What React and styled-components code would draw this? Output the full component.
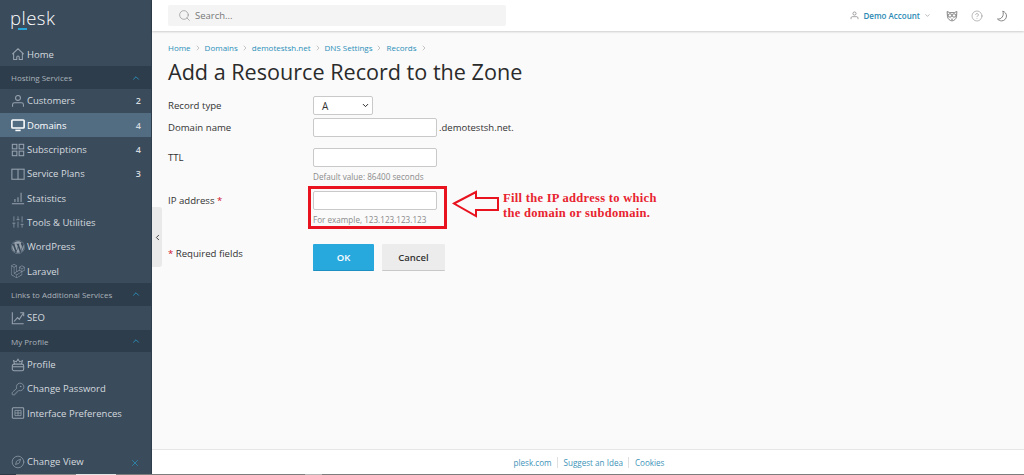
import React from "react";
import styled, { createGlobalStyle } from "styled-components";
import {
  SlidersVertical,
  KeyRound,
  Compass,
  X,
  Search,
  ChevronUp,
  ChevronDown,
  ChevronLeft,
  ChevronRight,
  HelpCircle,
} from "lucide-react";
import { FaWordpress, FaLaravel } from "react-icons/fa";

const GlobalStyle = createGlobalStyle`
  html, body { margin: 0; padding: 0; height: 100%; overflow: hidden; }
  body { font-family: "Open Sans", "Liberation Sans", sans-serif; color: #333; }
  #root { height: 100%; }
`;

const svg = (children) => ({ size = 14, strokeWidth, ...props }) => (
  <svg width={size} height={size} viewBox="0 0 16 16" fill="none" stroke="currentColor" strokeWidth="1.2" {...props}>
    {children}
  </svg>
);

const HomeIcon = svg(
  <path d="M1.5 8.2L8 2l6.5 6.2M3 7v7.2h3.6v-2.6a1.4 1.4 0 0 1 2.8 0v2.6H13V7" />
);
const UserIcon = svg(
  <>
    <circle cx="8" cy="4.5" r="2.8" />
    <path d="M1.8 14.5v-2.2c0-1.2 1-2.2 2.2-2.2h8c1.2 0 2.2 1 2.2 2.2v2.2" />
  </>
);
const MonitorIcon = svg(
  <>
    <rect x="1" y="2.2" width="14" height="9.3" rx="1" strokeWidth="1.8" />
    <path d="M5 14.2h6" strokeWidth="1.8" />
  </>
);
const GridIcon = svg(
  <>
    <rect x="1.5" y="1.5" width="5.2" height="5.2" />
    <rect x="9.3" y="1.5" width="5.2" height="5.2" />
    <rect x="1.5" y="9.3" width="5.2" height="5.2" />
    <rect x="9.3" y="9.3" width="5.2" height="5.2" />
  </>
);
const BookIcon = svg(
  <>
    <rect x="1" y="2.5" width="14" height="11.5" />
    <path d="M8 2.5v11.5" />
  </>
);
const StatsIcon = svg(<path d="M1 14.5h14M4.5 12.5V9M8 12.5V7M11.5 12.5V2" />);
const SeoIcon = svg(
  <>
    <path d="M1.5 1.5v13h13" />
    <path d="M3.5 12l4-4.5 2 2L14 2.5" />
    <path d="M10.5 2h4v4" />
  </>
);
const ProfileIcon = svg(
  <>
    <rect x="1.5" y="7" width="13" height="7.5" rx="2" />
    <path d="M1.5 10h13" />
    <path d="M4 7L3 3l3 1.5 2-3 2 3L13 3l-1 4" />
  </>
);
const PrefsIcon = svg(
  <>
    <rect x="1.5" y="2" width="13" height="12" rx="1" />
    <path d="M4.500 5h7v6h-7zM8 5v6M4.500 8h7" strokeWidth="0.9" />
  </>
);
const OwlIcon = svg(
  <>
    <path d="M1.5 2l3.5 1.5h6L14.5 2 14 9c-.5 3-3.5 5.5-6 5.5S2.500 12 2 9z" />
    <circle cx="5.300" cy="7.300" r="2.300" />
    <circle cx="10.700" cy="7.300" r="2.300" />
    <path d="M7 11.500l1 1.500 1-1.500" />
  </>
);
const CrescentIcon = svg(<path d="M9 1.500c3 1 5 3.500 5 6.500 0 3.600-3 6.500-6.500 6.500-2 0-4-.9-5.500-2.500 5 1 9.500-4.500 7-10.500z" />);

const navTop = [
  { label: "Customers", icon: UserIcon, count: 2 },
  { label: "Domains", icon: MonitorIcon, count: 4, active: true },
  { label: "Subscriptions", icon: GridIcon, count: 4 },
  { label: "Service Plans", icon: BookIcon, count: 3 },
  { label: "Statistics", icon: StatsIcon },
  { label: "Tools & Utilities", icon: SlidersVertical },
  { label: "WordPress", icon: FaWordpress },
  { label: "Laravel", icon: FaLaravel },
];

const navProfile = [
  { label: "Profile", icon: ProfileIcon },
  { label: "Change Password", icon: KeyRound },
  { label: "Interface Preferences", icon: PrefsIcon },
];

const crumbs = ["Home", "Domains", "demotestsh.net", "DNS Settings", "Records"];

const NavRow = ({ item }) => {
  const Icon = item.icon;
  return (
    <Row $active={item.active}>
      <IconSlot $active={item.active}>
        <Icon size={14} strokeWidth={1.2} />
      </IconSlot>
      <RowLabel $active={item.active}>{item.label}</RowLabel>
      {item.count && <Count>{item.count}</Count>}
    </Row>
  );
};

const Section = ({ title }) => (
  <SectionBand>
    {title}
    <ChevronUp size={10} color="#2a9ac9" strokeWidth={2} />
  </SectionBand>
);

const App = () => (
  <Page>
    <GlobalStyle />
    <Sidebar>
      <Logo>plesk</Logo>
      <NavRow item={{ label: "Home", icon: HomeIcon }} />
      <Section title="Hosting Services" />
      {navTop.map((item) => (
        <NavRow key={item.label} item={item} />
      ))}
      <Section title="Links to Additional Services" />
      <NavRow item={{ label: "SEO", icon: SeoIcon }} />
      <Section title="My Profile" />
      {navProfile.map((item) => (
        <NavRow key={item.label} item={item} />
      ))}
      <SidebarFoot>
        <NavRow item={{ label: "Change View", icon: Compass }} />
        <CloseMark>
          <X size={10} strokeWidth={1.6} />
        </CloseMark>
      </SidebarFoot>
    </Sidebar>
    <CollapseHandle>
      <ChevronLeft size={9} strokeWidth={2.4} />
    </CollapseHandle>

    <Main>
      <TopBar>
        <SearchBox>
          <Search size={13} strokeWidth={1.2} color="#8a8a8a" />
          Search...
        </SearchBox>
        <TopActions>
          <Account>
            <UserIcon size={9} />
            <AccountName>Demo Account</AccountName>
            <ChevronDown size={7} strokeWidth={2} color="#888" />
          </Account>
          <TopIcon>
            <OwlIcon size={12} />
          </TopIcon>
          <TopIcon>
            <HelpCircle size={12} strokeWidth={1} />
          </TopIcon>
          <TopIcon>
            <CrescentIcon size={12} />
          </TopIcon>
        </TopActions>
      </TopBar>

      <Content>
        <Breadcrumbs>
          {crumbs.map((crumb) => (
            <Crumb key={crumb}>
              {crumb}
              <ChevronRight size={8} strokeWidth={1.4} color="#888" />
            </Crumb>
          ))}
        </Breadcrumbs>
        <Title>Add a Resource Record to the Zone</Title>

        <Form>
          <TypeRow>
            <Label>Record type</Label>
            <SelectBox>
              A
              <ChevronDown size={9} strokeWidth={2.6} color="#222" />
            </SelectBox>
          </TypeRow>
          <DomainRow>
            <Label>Domain name</Label>
            <Field>
              <Input />
              <Suffix>.demotestsh.net.</Suffix>
            </Field>
          </DomainRow>
          <HintRow>
            <Label>TTL</Label>
            <div>
              <Input />
              <Hint>Default value: 86400 seconds</Hint>
            </div>
          </HintRow>
          <HintRow>
            <Label>
              IP address <Star>*</Star>
            </Label>
            <div>
              <Input />
              <Hint>For example, 123.123.123.123</Hint>
            </div>
          </HintRow>
          <ButtonsRow>
            <Label>
              <Star>*</Star> Required fields
            </Label>
            <Buttons>
              <OkButton>OK</OkButton>
              <CancelButton>Cancel</CancelButton>
            </Buttons>
          </ButtonsRow>
        </Form>

        <RedBox />
        <Arrow width="48" height="28" viewBox="0 0 48 28">
          <path
            d="M2 13.500L24 2v6h22v12H24v6z"
            fill="none"
            stroke="#e8131f"
            strokeWidth="2"
            strokeLinejoin="miter"
          />
        </Arrow>
        <Note>
          Fill the IP address to which
          <br />
          the domain or subdomain.
        </Note>
      </Content>

      <Footer>
        <FooterLink>plesk.com</FooterLink>
        <FooterLink>Suggest an Idea</FooterLink>
        <FooterLink>Cookies</FooterLink>
      </Footer>
    </Main>
    <BottomEdge />
  </Page>
);

export default App;

const Page = styled.div`
  display: flex;
  height: 475px;
  width: 1024px;
  position: relative;
  overflow: hidden;
`;

const BottomEdge = styled.div`
  position: absolute;
  left: 0;
  right: 0;
  bottom: 0;
  height: 1px;
  z-index: 3;
  background: linear-gradient(
    to right,
    #2e3a46 0 16px,
    #8a8a8a 16px 76px,
    #e4e4e4 76px 116px,
    #7d7d7d 116px 305px,
    #b5b5b5 305px 322px,
    #7d7d7d 322px
  );
`;

const Sidebar = styled.aside`
  width: 151px;
  flex: none;
  display: flex;
  flex-direction: column;
  background: #3a4b5c;
  border-right: 1px solid #2f3e4c;
  position: relative;
`;

const Logo = styled.div`
  height: 42px;
  flex: none;
  padding-left: 10px;
  box-sizing: border-box;
  font-size: 18.5px;
  font-weight: 300;
  line-height: 36px;
  color: #fff;
  letter-spacing: 0.5px;
  position: relative;

  &::after {
    content: "";
    position: absolute;
    left: 18px;
    top: 28px;
    width: 9px;
    height: 2px;
    background: #28a5d8;
  }
`;

const Row = styled.div`
  height: 24.3px;
  flex: none;
  display: flex;
  align-items: center;
  padding: 0 10px 0 11px;
  font-size: 9.5px;
  background: ${(p) => (p.$active ? "#526d82" : "transparent")};
`;

const IconSlot = styled.span`
  width: 16px;
  height: 14px;
  flex: none;
  display: flex;
  align-items: center;
  color: ${(p) => (p.$active ? "#fff" : "#98a3ae")};
`;

const RowLabel = styled.span`
  color: ${(p) => (p.$active ? "#fff" : "#d5dadf")};
  flex: 1;
  white-space: nowrap;
`;

const Count = styled.span`
  color: #d5dadf;
  font-size: 9px;
  font-weight: 600;
`;

const SectionBand = styled.div`
  height: 22.5px;
  flex: none;
  display: flex;
  align-items: center;
  justify-content: space-between;
  padding: 0 10px 0 11px;
  background: #2e3d4b;
  color: #aab3bb;
  font-size: 8px;
`;

const SidebarFoot = styled.div`
  margin-top: auto;
  padding-bottom: 1px;
  position: relative;
`;

const CloseMark = styled.span`
  position: absolute;
  right: 11px;
  top: 8px;
  color: #2a9ac9;
  display: flex;
`;

const CollapseHandle = styled.div`
  position: absolute;
  left: 152px;
  top: 207px;
  width: 10px;
  height: 60px;
  background: #e9e9e9;
  border-radius: 0 3px 3px 0;
  display: flex;
  align-items: center;
  justify-content: center;
  color: #333;
  z-index: 2;
`;

const Main = styled.main`
  flex: 1;
  min-width: 0;
  display: flex;
  flex-direction: column;
`;

const TopBar = styled.header`
  height: 31px;
  flex: none;
  display: flex;
  align-items: center;
  justify-content: space-between;
  padding: 0 0 0 16px;
  background: #fff;
  box-shadow: 0 1px 2px rgba(0, 0, 0, 0.18);
  position: relative;
  z-index: 1;
`;

const SearchBox = styled.div`
  width: 338px;
  height: 21px;
  box-sizing: border-box;
  display: flex;
  align-items: center;
  gap: 4px;
  padding-left: 10px;
  background: #f4f4f4;
  border-radius: 2px;
  color: #777;
  font-size: 9.5px;
`;

const TopActions = styled.div`
  display: flex;
  align-items: center;
  padding-right: 16px;
`;

const Account = styled.div`
  display: flex;
  align-items: center;
  gap: 4px;
  color: #777;
  margin-right: 2px;
`;

const AccountName = styled.span`
  color: #2b8ab3;
  font-size: 8px;
  font-weight: 600;
`;

const TopIcon = styled.span`
  display: flex;
  color: #777;
  margin-left: 13px;
`;

const Content = styled.div`
  flex: 1;
  background: #fafafa;
  padding: 11px 16px 0;
  position: relative;
`;

const Breadcrumbs = styled.nav`
  display: flex;
  height: 11px;
  align-items: center;
  gap: 3px;
`;

const Crumb = styled.span`
  display: flex;
  align-items: center;
  gap: 3px;
  color: #2b8fb9;
  font-size: 8px;
`;

const Title = styled.h1`
  margin: 2px 0 0;
  font-size: 21.6px;
  line-height: 34px;
  font-weight: 400;
  color: #2b2b2b;
`;

const Form = styled.div`
  margin-top: 7px;
  font-size: 9.6px;
  color: #333;
`;

const FormRow = styled.div`
  display: grid;
  grid-template-columns: 145px 1fr;
`;

const TypeRow = styled(FormRow)`
  height: 22px;
`;

const DomainRow = styled(FormRow)`
  height: 30px;
`;

const HintRow = styled(FormRow)`
  height: 43px;
`;

const ButtonsRow = styled(FormRow)`
  margin-top: 10px;
`;

const Label = styled.div`
  padding-top: 3px;
  line-height: 14px;
`;

const Field = styled.div`
  display: flex;
  align-items: center;
  height: 19px;
`;

const SelectBox = styled.div`
  width: 60px;
  height: 19px;
  box-sizing: border-box;
  background: #fff;
  border: 1px solid #c9c9c9;
  border-radius: 2px;
  display: flex;
  align-items: center;
  justify-content: space-between;
  padding: 0 2px 0 8px;
  font-size: 10px;
`;

const Input = styled.div`
  width: 124px;
  height: 19px;
  box-sizing: border-box;
  background: #fff;
  border: 1px solid #c9c9c9;
  border-radius: 2px;
`;

const Suffix = styled.span`
  margin-left: 2px;
  font-size: 9.5px;
  color: #333;
`;

const Hint = styled.div`
  margin-top: 4px;
  font-size: 8.15px;
  line-height: 11px;
  color: #8b8b8b;
`;

const Star = styled.span`
  color: #d0122d;
`;

const Buttons = styled.div`
  display: flex;
  gap: 8px;
`;

const OkButton = styled.div`
  width: 61px;
  height: 27px;
  background: #28a9de;
  border-bottom: 1px solid #1d8fc0;
  box-sizing: border-box;
  border-radius: 1px;
  color: #fff;
  font-size: 9.5px;
  font-weight: 600;
  display: flex;
  align-items: center;
  justify-content: center;
`;

const CancelButton = styled(OkButton)`
  width: 63px;
  background: #ececec;
  border-bottom: 1px solid #c8c8c8;
  color: #333;
`;

const RedBox = styled.div`
  position: absolute;
  left: 156px;
  top: 155px;
  width: 139px;
  height: 43px;
  box-sizing: border-box;
  border: 3px solid #e8131f;
`;

const Arrow = styled.svg`
  position: absolute;
  left: 300px;
  top: 159px;
`;

const Note = styled.div`
  position: absolute;
  left: 351px;
  top: 160px;
  font-family: "Liberation Serif", serif;
  font-weight: 700;
  font-size: 12.5px;
  line-height: 15px;
  letter-spacing: 0.3px;
  color: #e8232f;
  white-space: nowrap;
`;

const Footer = styled.footer`
  height: 26px;
  flex: none;
  display: flex;
  align-items: center;
  justify-content: center;
  background: #fff;
  border-top: 1px solid #e6e6e6;
  box-sizing: border-box;
  padding-left: 2px;
`;

const FooterLink = styled.span`
  color: #3e93b8;
  font-size: 8.1px;
  padding: 0 5.5px;
  border-left: 1px solid #e0e0e0;

  &:first-child {
    border-left: none;
  }
`;
